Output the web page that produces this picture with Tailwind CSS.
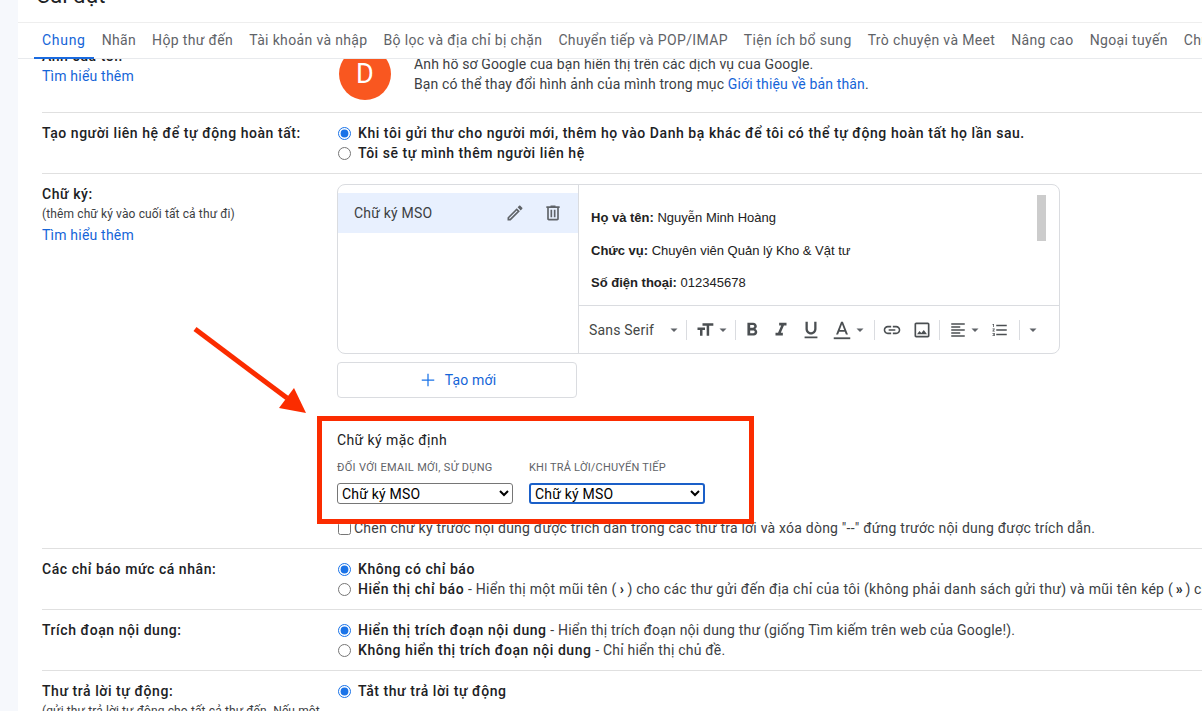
<!DOCTYPE html>
<html lang="vi">

<head>
    <meta charset="UTF-8" />
    <title>Cài đặt</title>
    <script src="https://cdn.jsdelivr.net/npm/@tailwindcss/browser@4"></script>
</head>

<body class="relative flex h-[711px] w-[1202px] overflow-hidden bg-[#f6f8fc] font-['Roboto',sans-serif] text-[14px] leading-5 tracking-[0.2px] text-[#3c4043]">
    <div class="w-[18px] shrink-0"></div>

    <main class="flex min-w-0 flex-1 flex-col bg-white">
        <div class="h-[23px] shrink-0 overflow-hidden border-b border-[#eeeeee] pl-[18px]">
            <h1 class="-mt-[18px] text-[22px] leading-7 tracking-normal text-[#202124]">Cài đặt</h1>
        </div>

        <nav class="flex h-[36px] shrink-0 items-center whitespace-nowrap border-b border-[#e8eaed] pl-4 tracking-[0.35px] text-[#5f6368]">
            <a class="relative flex h-full items-center px-2 pb-[2px] tracking-[0.7px] text-[#1565d8]">Chung<span class="absolute bottom-[-1px] left-0 right-0 h-[2px] bg-[#1a6be0]"></span></a>
            <a class="flex h-full items-center px-2 pb-[2px]">Nhãn</a>
            <a class="flex h-full items-center px-2 pb-[2px]">Hộp thư đến</a>
            <a class="flex h-full items-center px-2 pb-[2px]">Tài khoản và nhập</a>
            <a class="flex h-full items-center px-2 pb-[2px]">Bộ lọc và địa chỉ bị chặn</a>
            <a class="flex h-full items-center px-2 pb-[2px]">Chuyển tiếp và POP/IMAP</a>
            <a class="flex h-full items-center px-2 pb-[2px]">Tiện ích bổ sung</a>
            <a class="flex h-full items-center px-2 pb-[2px]">Trò chuyện và Meet</a>
            <a class="flex h-full items-center px-2 pb-[2px]">Nâng cao</a>
            <a class="flex h-full items-center px-2 pb-[2px]">Ngoại tuyến</a>
            <a class="flex h-full items-center px-2 pb-[2px]">Chủ đề</a>
        </nav>

        <div class="min-h-0 flex-1 overflow-hidden pl-6">
            <!-- first row is scrolled partly under the tabs -->
            <section class="-mt-[13px] flex h-[67px] border-b border-[#e0e0e0]">
                <div class="w-[295px] shrink-0">
                    <div class="font-medium tracking-[0.55px] text-[#202124]">Ảnh của tôi:</div>
                    <a class="text-[#1565d8]">Tìm hiểu thêm</a>
                </div>
                <div class="ml-[2px] mt-[2px] flex h-[52px] w-[52px] shrink-0 items-center justify-center rounded-full bg-[#f95720] text-[27px] text-white">D</div>
                <div class="ml-[23px] mt-2 whitespace-nowrap tracking-[0.14px]">
                    <div>Ảnh hồ sơ Google của bạn hiển thị trên các dịch vụ của Google.</div>
                    <div>Bạn có thể thay đổi hình ảnh của mình trong mục <a class="text-[#1565d8]">Giới thiệu về bản thân</a>.</div>
                </div>
            </section>

            <section class="flex border-b border-[#e0e0e0] pb-[10px] pt-[10px]">
                <div class="w-[295px] shrink-0 font-medium tracking-[0.55px] text-[#202124]">Tạo người liên hệ để tự động hoàn tất:</div>
                <div class="whitespace-nowrap tracking-[0.55px] text-[#202124]">
                    <label class="flex h-5 items-center gap-[7px] font-medium"><input type="radio" name="contacts" checked class="m-0 ml-px h-[13px] w-[13px] accent-[#1a73e8]" />Khi tôi gửi thư cho người mới, thêm họ vào Danh bạ khác để tôi có thể tự động hoàn tất họ lần sau.</label>
                    <label class="flex h-5 items-center gap-[7px] font-medium"><input type="radio" name="contacts" class="m-0 ml-px h-[13px] w-[13px]" />Tôi sẽ tự mình thêm người liên hệ</label>
                </div>
            </section>

            <section class="flex border-b border-[#e0e0e0] pb-[10px] pt-[10px]">
                <div class="w-[295px] shrink-0">
                    <div class="font-medium tracking-[0.55px] text-[#202124]">Chữ ký:</div>
                    <div class="text-[12px] leading-5 tracking-[0.12px] text-[#3c4043]">(thêm chữ ký vào cuối tất cả thư đi)</div>
                    <a class="mt-[1px] block text-[#1565d8]">Tìm hiểu thêm</a>
                </div>
                <div class="min-w-0 flex-1">
                    <div class="flex h-[170px] w-[723px] overflow-hidden rounded-lg border border-[#dadce0]">
                        <div class="w-[241px] shrink-0 border-r border-[#dadce0] pt-2">
                            <div class="flex h-10 items-center bg-[#e8f0fe] pl-4 pr-[15px] text-[#3c4043]">
                                <span>Chữ ký MSO</span>
                                <svg class="ml-auto h-5 w-5 fill-[#5f6368]" viewBox="0 0 24 24"><path d="M14.06 9.02l.92.92L5.92 19H5v-.92l9.06-9.06M17.66 3c-.25 0-.51.1-.7.29l-1.83 1.83 3.75 3.75 1.83-1.83c.39-.39.39-1.02 0-1.41l-2.34-2.34c-.2-.2-.45-.29-.71-.29zm-3.6 3.19L3 17.25V21h3.75L17.81 9.94l-3.75-3.75z" /></svg>
                                <svg class="ml-[18px] h-5 w-5 fill-[#5f6368]" viewBox="0 0 24 24"><path d="M15 4V3H9v1H4v2h1v13c0 1.1.9 2 2 2h10c1.1 0 2-.9 2-2V6h1V4h-5zm2 15H7V6h10v13zM9 8h2v9H9zm4 0h2v9h-2z" /></svg>
                            </div>
                        </div>
                        <div class="flex min-w-0 flex-1 flex-col">
                            <div class="relative flex h-[121px] shrink-0 flex-col border-b border-[#dadce0] pl-3 pt-[24px] font-['Liberation_Sans',sans-serif] text-[13px] leading-[17px] tracking-normal text-[#222222]">
                                <p><b>Họ và tên:</b> Nguyễn Minh Hoàng</p>
                                <p class="mt-4"><b>Chức vụ:</b> Chuyên viên Quản lý Kho &amp; Vật tư</p>
                                <p class="mt-[15px]"><b>Số điện thoại:</b> 012345678</p>
                                <div class="absolute right-[13px] top-[10px] h-[46px] w-[9px] bg-[#cccccc]"></div>
                            </div>
                            <div class="flex h-[47px] items-center text-[#444746]">
                                <div class="flex w-[107px] items-center pl-[10px]">
                                    <span>Sans Serif</span>
                                    <svg class="ml-auto mr-[7px] h-[10px] w-[10px] fill-[#5f6368]" viewBox="0 0 10 10"><path d="M1.5 3.5h7L5 7z" /></svg>
                                </div>
                                <div class="h-5 w-px bg-[#dadce0]"></div>
                                <div class="flex w-[48px] items-center pl-[8px]">
                                    <svg class="h-5 w-5 fill-[#4b4f52]" viewBox="0 0 24 24"><path d="M9 4v3h5v12h3V7h5V4H9zm-6 8h3v7h3v-7h3V9H3v3z" /></svg>
                                    <svg class="ml-[3px] h-[10px] w-[10px] fill-[#5f6368]" viewBox="0 0 10 10"><path d="M1.5 3.5h7L5 7z" /></svg>
                                </div>
                                <div class="h-5 w-px bg-[#dadce0]"></div>
                                <div class="flex w-[138px] items-center pl-[5px]">
                                    <svg class="h-[22px] w-[22px] fill-[#4b4f52]" viewBox="0 0 24 24"><path d="M15.6 10.79c.97-.67 1.65-1.77 1.65-2.79 0-2.26-1.75-4-4-4H7v14h7.04c2.09 0 3.71-1.7 3.71-3.79 0-1.52-.86-2.82-2.15-3.42zM10 6.5h3c.83 0 1.5.67 1.5 1.5s-.67 1.5-1.5 1.5h-3v-3zm3.5 9H10v-3h3.5c.83 0 1.5.67 1.5 1.5s-.67 1.5-1.5 1.5z" /></svg>
                                    <svg class="ml-[7px] h-[22px] w-[22px] fill-[#4b4f52]" viewBox="0 0 24 24"><path d="M10 4v3h2.21l-3.42 8H6v3h8v-3h-2.21l3.42-8H18V4z" /></svg>
                                    <svg class="ml-[8px] h-[22px] w-[22px] fill-[#4b4f52]" viewBox="0 0 24 24"><path d="M12 17c3.31 0 6-2.69 6-6V3h-2.5v8c0 1.93-1.57 3.5-3.5 3.5S8.5 12.93 8.5 11V3H6v8c0 3.31 2.69 6 6 6zm-7 2v2h14v-2H5z" /></svg>
                                    <svg class="ml-[9px] h-[22px] w-[22px] fill-[#4b4f52]" viewBox="0 0 24 24"><path d="M11 3L5.5 17h2.25l1.12-3h6.25l1.12 3h2.25L13 3h-2zm-1.38 9L12 5.67 14.38 12H9.62z" /><path d="M3 20h18v2H3z" /></svg>
                                    <svg class="ml-[2px] h-[10px] w-[10px] fill-[#5f6368]" viewBox="0 0 10 10"><path d="M1.5 3.5h7L5 7z" /></svg>
                                </div>
                                <div class="h-5 w-px bg-[#dadce0]"></div>
                                <div class="flex w-[64px] items-center pl-[7px]">
                                    <svg class="h-5 w-5 fill-[#4b4f52]" viewBox="0 0 24 24"><path d="M3.9 12c0-1.71 1.39-3.1 3.1-3.1h4V7H7c-2.76 0-5 2.24-5 5s2.24 5 5 5h4v-1.9H7c-1.71 0-3.1-1.39-3.1-3.1zM8 13h8v-2H8v2zm9-6h-4v1.9h4c1.71 0 3.1 1.39 3.1 3.1s-1.39 3.1-3.1 3.1h-4V17h4c2.76 0 5-2.24 5-5s-2.24-5-5-5z" /></svg>
                                    <svg class="ml-[10px] h-5 w-5 fill-[#4b4f52]" viewBox="0 0 24 24"><path d="M19 5v14H5V5h14m0-2H5c-1.1 0-2 .9-2 2v14c0 1.1.9 2 2 2h14c1.1 0 2-.9 2-2V5c0-1.1-.9-2-2-2zM14.14 11.86l-3 3.87L9 13.14 6 17h12l-3.86-5.14z" /></svg>
                                </div>
                                <div class="h-5 w-px bg-[#dadce0]"></div>
                                <div class="flex w-[79px] items-center pl-[9px]">
                                    <svg class="h-[18px] w-[18px] fill-[#4b4f52]" viewBox="0 0 24 24"><path d="M15 15H3v2h12v-2zm0-8H3v2h12V7zM3 13h18v-2H3v2zm0 8h18v-2H3v2zM3 3v2h18V3H3z" /></svg>
                                    <svg class="ml-[3px] h-[10px] w-[10px] fill-[#5f6368]" viewBox="0 0 10 10"><path d="M1.5 3.5h7L5 7z" /></svg>
                                    <svg class="ml-[11px] h-[18px] w-[18px] fill-[#4b4f52]" viewBox="0 0 24 24"><path d="M2 17h2v.5H3v1h1v.5H2v1h3v-4H2v1zm1-9h1V4H2v1h1v3zm-1 3h1.8L2 13.1v.9h3v-1H3.2L5 10.9V10H2v1zm5-6v2h14V5H7zm0 14h14v-2H7v2zm0-6h14v-2H7v2z" /></svg>
                                </div>
                                <div class="h-5 w-px bg-[#dadce0]"></div>
                                <svg class="ml-[8px] h-[10px] w-[10px] fill-[#5f6368]" viewBox="0 0 10 10"><path d="M1.5 3.5h7L5 7z" /></svg>
                            </div>
                        </div>
                    </div>

                    <button class="mt-2 flex h-[36px] w-[240px] items-center justify-center rounded border border-[#dadce0] text-[#1565d8]">
                        <svg class="mr-[7px] h-5 w-5 fill-[#1a73e8]" viewBox="0 0 24 24"><path d="M19.5 12.75h-6.75v6.75h-1.5v-6.75H4.5v-1.5h6.75V4.5h1.5v6.75h6.75z" /></svg>
                        Tạo mới
                    </button>

                    <div class="mt-8 tracking-[0.4px] text-[#202124]">Chữ ký mặc định</div>
                    <div class="mt-[11px] flex gap-4">
                        <div class="w-[176px]">
                            <div class="text-[11px] uppercase leading-[14px] tracking-[0.32px] text-[#5f6368]">Đối với email mới, sử dụng</div>
                            <select class="mt-2 block h-[21px] w-full rounded-[3px] border border-[#767676] bg-white text-[14px] text-black">
                                <option>Chữ ký MSO</option>
                            </select>
                        </div>
                        <div class="w-[176px]">
                            <div class="text-[11px] uppercase leading-[14px] tracking-[0.2px] text-[#5f6368]">Khi trả lời/chuyển tiếp</div>
                            <select class="mt-2 block h-[21px] w-full rounded-[3px] border-2 border-[#1a5fc8] bg-white text-[14px] text-black">
                                <option>Chữ ký MSO</option>
                            </select>
                        </div>
                    </div>
                    <label class="mt-[14px] flex h-5 items-center gap-[3px] whitespace-nowrap tracking-[0.22px]"><input type="checkbox" class="m-0 ml-px h-[13px] w-[13px]" />Chèn chữ ký trước nội dung được trích dẫn trong các thư trả lời và xóa dòng "--" đứng trước nội dung được trích dẫn.</label>
                </div>
            </section>

            <section class="flex border-b border-[#e0e0e0] pb-[10px] pt-[10px]">
                <div class="w-[295px] shrink-0 font-medium tracking-[0.55px] text-[#202124]">Các chỉ báo mức cá nhân:</div>
                <div class="min-w-0 flex-1 whitespace-nowrap">
                    <label class="flex h-5 items-center gap-[7px]"><input type="radio" name="level" checked class="m-0 ml-px h-[13px] w-[13px] accent-[#1a73e8]" /><b class="font-medium tracking-[0.55px] text-[#202124]">Không có chỉ báo</b></label>
                    <label class="flex h-5 items-center gap-[7px]"><input type="radio" name="level" class="m-0 ml-px h-[13px] w-[13px]" /><span class="tracking-[0.29px]"><b class="font-medium tracking-[0.55px] text-[#202124]">Hiển thị chỉ báo</b> - Hiển thị một mũi tên <span class="tracking-[0px]">( <b class="font-bold text-[#202124]">›</b> )</span> cho các thư gửi đến địa chỉ của tôi (không phải danh sách gửi thư) và mũi tên kép <span class="tracking-[-0.3px]">( <b class="font-bold text-[#202124]">»</b> )</span> cho các thư chỉ gửi đến tôi.</span></label>
                </div>
            </section>

            <section class="flex border-b border-[#e0e0e0] pb-[10px] pt-[10px]">
                <div class="w-[295px] shrink-0 font-medium tracking-[0.55px] text-[#202124]">Trích đoạn nội dung:</div>
                <div class="min-w-0 flex-1 whitespace-nowrap">
                    <label class="flex h-5 items-center gap-[7px]"><input type="radio" name="snippet" checked class="m-0 ml-px h-[13px] w-[13px] accent-[#1a73e8]" /><span><b class="font-medium tracking-[0.55px] text-[#202124]">Hiển thị trích đoạn nội dung</b> - Hiển thị trích đoạn nội dung thư (giống Tìm kiếm trên web của Google!).</span></label>
                    <label class="flex h-5 items-center gap-[7px]"><input type="radio" name="snippet" class="m-0 ml-px h-[13px] w-[13px]" /><span><b class="font-medium tracking-[0.55px] text-[#202124]">Không hiển thị trích đoạn nội dung</b> - Chỉ hiển thị chủ đề.</span></label>
                </div>
            </section>

            <section class="flex pt-[10px]">
                <div class="w-[295px] shrink-0">
                    <div class="font-medium tracking-[0.55px] text-[#202124]">Thư trả lời tự động:</div>
                    <div class="text-[12px] leading-5 tracking-[0.12px]">(gửi thư trả lời tự động cho tất cả thư đến. Nếu một</div>
                </div>
                <label class="flex h-5 items-center gap-[7px] whitespace-nowrap"><input type="radio" checked class="m-0 ml-px h-[13px] w-[13px] accent-[#1a73e8]" /><b class="font-medium tracking-[0.55px] text-[#202124]">Tắt thư trả lời tự động</b></label>
            </section>
        </div>
    </main>

    <!-- annotation drawn over the screenshot -->
    <div class="absolute left-[317px] top-[416px] h-[108px] w-[437px] border-[5px] border-[#fb2c00]"></div>
    <svg class="absolute left-0 top-0 h-[711px] w-[1202px]" viewBox="0 0 1202 711" fill="none">
        <path d="M195 329L287 398" stroke="#fb2c00" stroke-width="5" />
        <path d="M306 413L279 408L294 388Z" fill="#fb2c00" />
    </svg>
</body>

</html>
